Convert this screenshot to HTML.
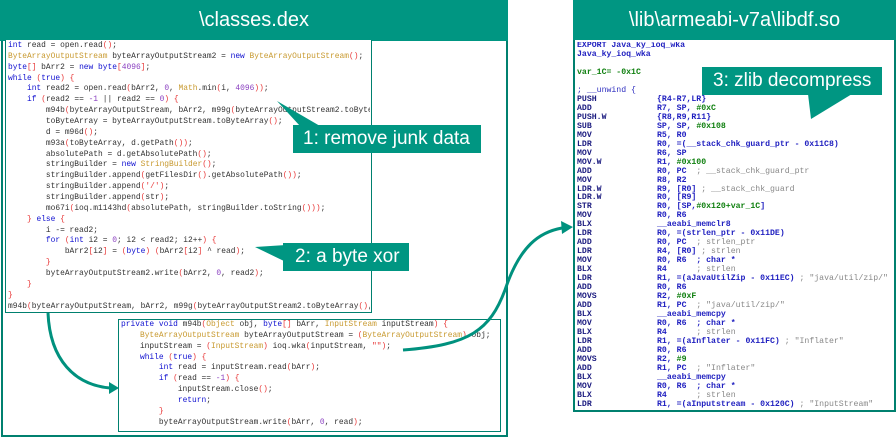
<!DOCTYPE html>
<html><head><meta charset="utf-8"><style>
*{margin:0;padding:0;box-sizing:border-box}
html,body{width:896px;height:438px;overflow:hidden}
body{background:#fff;position:relative;font-family:"Liberation Sans",sans-serif}
.abs{position:absolute}
.hdr{background:#009682;color:#fff;font-size:20px;text-align:center;line-height:41px}
.box{border:1px solid #00806f;background:#fff;overflow:hidden}
.jc{font-family:"Liberation Mono",monospace;font-size:7.9px;color:#333;position:absolute;overflow:hidden}
.jc div{height:10.87px;line-height:10.87px;white-space:pre}
.k{color:#1010d0}.t{color:#c89a30}.p{color:#e83838}.n{color:#8a40c0}.s{color:#e83838}
.ac{font-family:"Liberation Mono",monospace;font-size:8.2px;font-weight:bold;color:#1c1c80;position:absolute;overflow:hidden}
.ac div{height:8.97px;line-height:8.97px;white-space:pre}
.ac i{display:inline-block;width:80px;font-style:normal}
.g{color:#108010}.c{color:#888;font-weight:normal}.b{color:#2020c0}
.call{background:#009682;color:#fff;font-size:19px;line-height:28px;padding-left:10px}
</style></head><body>
<div class="abs" style="left:1px;top:0;width:507px;height:437px;border:2px solid #00806f"></div>
<div class="abs hdr" style="left:0;top:0;width:508px;height:41px">\classes.dex</div>
<div class="abs box" style="left:5px;top:40px;width:367px;height:273px;border-top:none"></div>
<div class="jc" style="left:8px;top:41px;width:362px;height:271px"><div><span class="k">int</span> read = open.read<span class="p">()</span>;</div><div><span class="t">ByteArrayOutputStream</span> byteArrayOutputStream2 = <span class="k">new</span> <span class="t">ByteArrayOutputStream</span><span class="p">()</span>;</div><div><span class="k">byte</span><span class="p">[]</span> bArr2 = <span class="k">new</span> <span class="k">byte</span><span class="p">[</span><span class="n">4096</span><span class="p">]</span>;</div><div><span class="k">while</span> <span class="p">(</span><span class="k">true</span><span class="p">)</span> <span class="p">{</span></div><div>    <span class="k">int</span> read2 = open.read<span class="p">(</span>bArr2, <span class="n">0</span>, <span class="t">Math</span>.min<span class="p">(</span>i, <span class="n">4096</span><span class="p">))</span>;</div><div>    <span class="k">if</span> <span class="p">(</span>read2 == <span class="n">-1</span> || read2 == <span class="n">0</span><span class="p">)</span> <span class="p">{</span></div><div>        m94b<span class="p">(</span>byteArrayOutputStream, bArr2, m99g<span class="p">(</span>byteArrayOutputStream2.toByteArray</div><div>        toByteArray = byteArrayOutputStream.toByteArray<span class="p">()</span>;</div><div>        d = m96d<span class="p">()</span>;</div><div>        m93a<span class="p">(</span>toByteArray, d.getPath<span class="p">())</span>;</div><div>        absolutePath = d.getAbsolutePath<span class="p">()</span>;</div><div>        stringBuilder = <span class="k">new</span> <span class="t">StringBuilder</span><span class="p">()</span>;</div><div>        stringBuilder.append<span class="p">(</span>getFilesDir<span class="p">()</span>.getAbsolutePath<span class="p">())</span>;</div><div>        stringBuilder.append<span class="p">(</span><span class="s">'/'</span><span class="p">)</span>;</div><div>        stringBuilder.append<span class="p">(</span>str<span class="p">)</span>;</div><div>        mo67i<span class="p">(</span>ioq.m1143hd<span class="p">(</span>absolutePath, stringBuilder.toString<span class="p">()))</span>;</div><div>    <span class="p">}</span> <span class="k">else</span> <span class="p">{</span></div><div>        i -= read2;</div><div>        <span class="k">for</span> <span class="p">(</span><span class="k">int</span> i2 = <span class="n">0</span>; i2 &lt; read2; i2++<span class="p">)</span> <span class="p">{</span></div><div>            bArr2<span class="p">[</span>i2<span class="p">]</span> = <span class="p">(</span><span class="k">byte</span><span class="p">)</span> <span class="p">(</span>bArr2<span class="p">[</span>i2<span class="p">]</span> ^ read<span class="p">)</span>;</div><div>        <span class="p">}</span></div><div>        byteArrayOutputStream2.write<span class="p">(</span>bArr2, <span class="n">0</span>, read2<span class="p">)</span>;</div><div>    <span class="p">}</span></div><div><span class="p">}</span></div><div>m94b<span class="p">(</span>byteArrayOutputStream, bArr2, m99g<span class="p">(</span>byteArrayOutputStream2.toByteArray<span class="p">()</span>,</div></div>
<div class="abs box" style="left:118px;top:319px;width:383px;height:113px"></div>
<div class="jc" style="left:121px;top:320px;width:378px;height:111px"><div><span class="k">private</span> <span class="k">void</span> m94b<span class="p">(</span><span class="t">Object</span> obj, <span class="k">byte</span><span class="p">[]</span> bArr, <span class="t">InputStream</span> inputStream<span class="p">)</span> <span class="p">{</span></div><div>    <span class="t">ByteArrayOutputStream</span> byteArrayOutputStream = <span class="p">(</span><span class="t">ByteArrayOutputStream</span><span class="p">)</span> obj;</div><div>    inputStream = <span class="p">(</span><span class="t">InputStream</span><span class="p">)</span> ioq.wka<span class="p">(</span>inputStream, <span class="s">""</span><span class="p">)</span>;</div><div>    <span class="k">while</span> <span class="p">(</span><span class="k">true</span><span class="p">)</span> <span class="p">{</span></div><div>        <span class="k">int</span> read = inputStream.read<span class="p">(</span>bArr<span class="p">)</span>;</div><div>        <span class="k">if</span> <span class="p">(</span>read == <span class="n">-1</span><span class="p">)</span> <span class="p">{</span></div><div>            inputStream.close<span class="p">()</span>;</div><div>            <span class="k">return</span>;</div><div>        <span class="p">}</span></div><div>        byteArrayOutputStream.write<span class="p">(</span>bArr, <span class="n">0</span>, read<span class="p">)</span>;</div></div>

<div class="abs hdr" style="left:573px;top:0;width:323px;height:41px">\lib\armeabi-v7a\libdf.so</div>
<div class="abs box" style="left:573px;top:40px;width:323px;height:372px;border-width:2px;border-top:none"></div>
<div class="ac" style="left:577px;top:42px;width:317px;height:368px"><div class="b">EXPORT Java_ky_ioq_wka</div><div class="b">Java_ky_ioq_wka</div><div></div><div class="g">var_1C= -0x1C</div><div></div><div class="c" style="color:#3030c0">; __unwind {</div><div><i>PUSH</i><span class="b">{R4-R7,LR}</span></div><div><i>ADD</i><span class="b">R7, SP, </span><span class="g">#0xC</span></div><div><i>PUSH.W</i><span class="b">{R8,R9,R11}</span></div><div><i>SUB</i><span class="b">SP, SP, </span><span class="g">#0x108</span></div><div><i>MOV</i><span class="b">R5, R0</span></div><div><i>LDR</i><span class="b">R0, =(__stack_chk_guard_ptr - 0x11C8)</span></div><div><i>MOV</i><span class="b">R6, SP</span></div><div><i>MOV.W</i><span class="b">R1, </span><span class="g">#0x100</span></div><div><i>ADD</i><span class="b">R0, PC</span>  <span class="c">; __stack_chk_guard_ptr</span></div><div><i>MOV</i><span class="b">R8, R2</span></div><div><i>LDR.W</i><span class="b">R9, [R0]</span> <span class="c">; __stack_chk_guard</span></div><div><i>LDR.W</i><span class="b">R0, [R9]</span></div><div><i>STR</i><span class="b">R0, [SP,</span><span class="g">#0x120+var_1C</span><span class="b">]</span></div><div><i>MOV</i><span class="b">R0, R6</span></div><div><i>BLX</i><span class="b">__aeabi_memclr8</span></div><div><i>LDR</i><span class="b">R0, =(strlen_ptr - 0x11DE)</span></div><div><i>ADD</i><span class="b">R0, PC</span>  <span class="c">; strlen_ptr</span></div><div><i>LDR</i><span class="b">R4, [R0]</span> <span class="c">; strlen</span></div><div><i>MOV</i><span class="b">R0, R6</span>  <span class="b">; char *</span></div><div><i>BLX</i><span class="b">R4</span>      <span class="c">; strlen</span></div><div><i>LDR</i><span class="b">R1, =(aJavaUtilZip - 0x11EC)</span> <span class="c">; "java/util/zip/"</span></div><div><i>ADD</i><span class="b">R0, R6</span></div><div><i>MOVS</i><span class="b">R2, </span><span class="g">#0xF</span></div><div><i>ADD</i><span class="b">R1, PC</span>  <span class="c">; "java/util/zip/"</span></div><div><i>BLX</i><span class="b">__aeabi_memcpy</span></div><div><i>MOV</i><span class="b">R0, R6</span>  <span class="b">; char *</span></div><div><i>BLX</i><span class="b">R4</span>      <span class="c">; strlen</span></div><div><i>LDR</i><span class="b">R1, =(aInflater - 0x11FC)</span> <span class="c">; "Inflater"</span></div><div><i>ADD</i><span class="b">R0, R6</span></div><div><i>MOVS</i><span class="b">R2, </span><span class="g">#9</span></div><div><i>ADD</i><span class="b">R1, PC</span>  <span class="c">; "Inflater"</span></div><div><i>BLX</i><span class="b">__aeabi_memcpy</span></div><div><i>MOV</i><span class="b">R0, R6</span>  <span class="b">; char *</span></div><div><i>BLX</i><span class="b">R4</span>      <span class="c">; strlen</span></div><div><i>LDR</i><span class="b">R1, =(aInputstream - 0x120C)</span> <span class="c">; "InputStream"</span></div></div>

<svg class="abs" style="left:0;top:0" width="896" height="438">
<polygon points="277,101 300,126 320,126" fill="#009682"/>
<polygon points="255,247 286,245 286,262" fill="#009682"/>
<polygon points="808,94 852,94 811,119" fill="#009682"/>
<path d="M48,313 C50,360 75,385 110,388" fill="none" stroke="#00917e" stroke-width="3"/>
<polygon points="119,388 109,382 109,394" fill="#00917e"/>
<path d="M403,350 C470,345 490,330 505,290 C520,245 540,232 562,228" fill="none" stroke="#00917e" stroke-width="3"/>
<polygon points="573,227 561,221 562,234" fill="#00917e"/>
</svg>
<div class="abs call" style="left:293px;top:125px;width:188px">1: remove junk data</div>
<div class="abs call" style="left:283px;top:243px;width:126px;padding-left:12px">2: a byte xor</div>
<div class="abs call" style="left:702px;top:67px;width:180px;padding-left:11px">3: zlib decompress</div>
</body></html>
